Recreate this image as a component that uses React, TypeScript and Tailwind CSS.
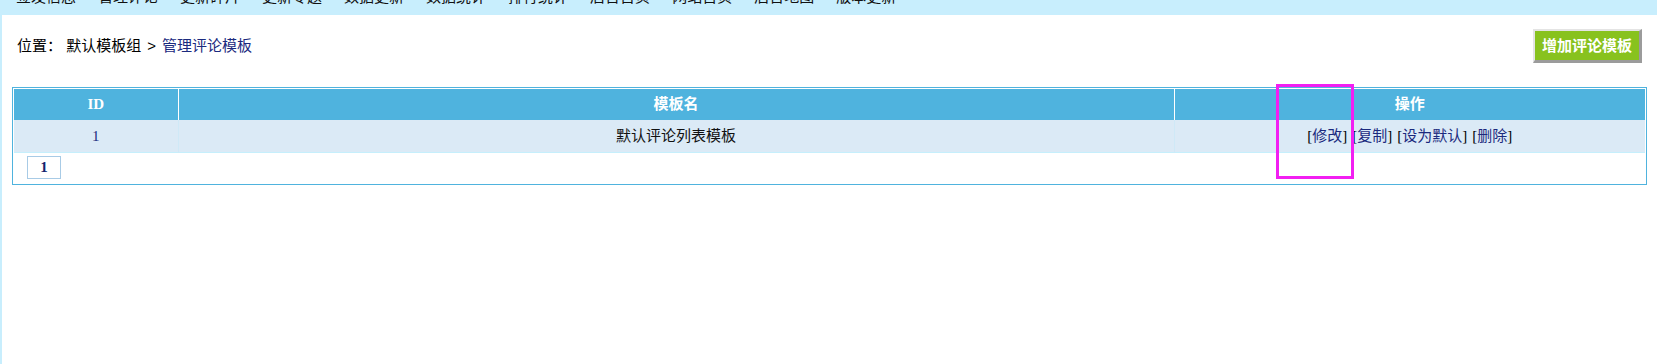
import React from "react";

const menu = [
  "签发信息",
  "管理评论",
  "更新碎片",
  "更新专题",
  "数据更新",
  "数据统计",
  "排行统计",
  "后台首页",
  "网站首页",
  "后台地图",
  "版本更新",
];

const actions = ["修改", "复制", "设为默认", "删除"];

export default function App() {
  return (
    <div
      className="relative w-[1657px] min-h-[364px] bg-white border-l-2 border-[#c8eefd] text-black"
      style={{ fontFamily: '"Liberation Sans", "Noto Sans CJK SC", sans-serif' }}
    >
      {/* top menu, scrolled up so only the bottom of the words shows */}
      <div className="-ml-[2px] h-[15px] overflow-hidden bg-[#c8eefd]">
        <div className="flex gap-[22px] pl-[16px] -mt-[12px]">
          {menu.map((m) => (
            <span key={m} className="text-[15px] leading-[18px] whitespace-nowrap text-[#111]">
              {m}
            </span>
          ))}
        </div>
      </div>

      <div className="px-[10px]">
        {/* breadcrumb + add button */}
        <div className="flex items-center justify-between mt-[14px] pl-[5px] pr-[5px]">
          <div className="text-[15px] leading-[20px]">
            位置：&nbsp;默认模板组<span className="mx-[6px]">&gt;</span>
            <a className="text-[#1b2a7e]">管理评论模板</a>
          </div>
          <button className="h-[34px] px-[7px] bg-[#88c21e] border-t-2 border-l-2 border-t-[#e4e4e4] border-l-[#e4e4e4] border-r-[3px] border-b-[3px] border-r-[#9b9b9b] border-b-[#9b9b9b] text-white font-bold text-[15px] leading-[29px]">
            增加评论模板
          </button>
        </div>

        {/* template list */}
        <div
          className="mt-[24px] border border-[#4fb3de] p-px bg-white"
          style={{ fontFamily: '"Liberation Serif", "Noto Sans CJK SC", serif' }}
        >
          <table className="w-full border-collapse text-[15px]">
            <thead>
              <tr className="h-[31px] bg-[#4fb3de] text-white font-bold">
                <th className="w-[164px] border-r border-white font-bold">ID</th>
                <th className="w-[996px] border-r border-white font-bold">模板名</th>
                <th className="font-bold">操作</th>
              </tr>
            </thead>
            <tbody>
              <tr className="h-[32px] bg-[#dbeaf6] border-b border-[#c6effc] text-center">
                <td className="border-r border-[#cfe9f7] text-[#1b2a7e]">1</td>
                <td className="border-r border-[#cfe9f7] text-[#111]">默认评论列表模板</td>
                <td>
                  {actions.map((a, i) => (
                    <span key={a} className={i > 0 ? "ml-[5px]" : ""}>
                      [<a className="text-[#1b2a7e]">{a}</a>]
                    </span>
                  ))}
                </td>
              </tr>
              <tr className="h-[31px]">
                <td colSpan={3} className="pl-[13px] pt-[3px] pb-[4px]">
                  <span className="flex items-center justify-center w-[34px] h-[23px] border border-[#a8cbe6] font-bold text-[#14236e] leading-none">
                    1
                  </span>
                </td>
              </tr>
            </tbody>
          </table>
        </div>
      </div>

      {/* highlight frame drawn over the 修改 link */}
      <div className="absolute left-[1274px] top-[84px] w-[78px] h-[95px] border-[3px] border-[#f21ff2] pointer-events-none" />
    </div>
  );
}
